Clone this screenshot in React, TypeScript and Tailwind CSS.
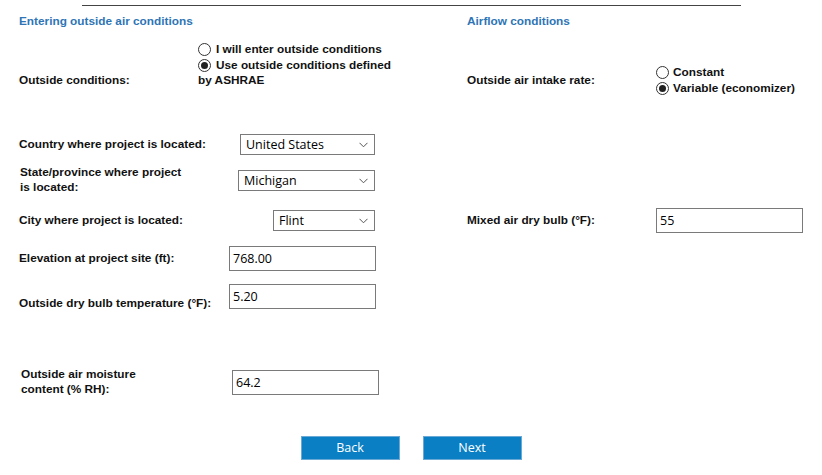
import React from "react";

const LABEL = "text-[11.8px] font-bold text-[#111] leading-[15px]";
const FIELD_FONT = { fontFamily: '"Open Sans", "Noto Sans", sans-serif' };

function Radio({ checked }: { checked?: boolean }) {
  return (
    <span className="inline-flex w-[13px] h-[13px] flex-shrink-0 rounded-full border border-[#333] bg-white items-center justify-center">
      {checked && <span className="w-[7px] h-[7px] rounded-full bg-[#222]" />}
    </span>
  );
}

function Select({ value, width }: { value: string; width: string }) {
  return (
    <div
      className={`${width} h-[21px] border border-[#7a7a7a] bg-white flex items-center justify-between pl-[5px] pr-[6px] pt-[2px] text-[12.5px] text-black`}
      style={FIELD_FONT}
    >
      <span>{value}</span>
      <svg width="9" height="6" viewBox="0 0 9 6" className="flex-shrink-0 -mt-[2px]">
        <path d="M0.5 0.8 L4.5 4.8 L8.5 0.8" fill="none" stroke="#555" strokeWidth="1" />
      </svg>
    </div>
  );
}

function Input({ value }: { value: string }) {
  return (
    <div
      className="w-[147px] h-[25px] border border-[#7a7a7a] bg-white flex items-center pl-[3px] pt-[2px] text-[12.5px] text-black"
      style={FIELD_FONT}
    >
      {value}
    </div>
  );
}

export default function App() {
  return (
    <div
      className="w-[822px] h-[475px] bg-white overflow-hidden"
      style={{ fontFamily: '"Liberation Sans", Arial, sans-serif' }}
    >
      <div className="pt-[5px]">
        <div className="ml-[82px] w-[659px] h-px bg-[#444]" />
      </div>

      <div className="flex items-start">
        {/* Left column */}
        <div className="w-[467px] pl-[19px] flex flex-col">
          <div className="mt-[8px] h-[14px] leading-[14px] text-[11.8px] font-bold text-[#2e75b6]">
            Entering outside air conditions
          </div>

          <div className="mt-[13px] flex items-end">
            <div className={`w-[179px] ${LABEL}`}>Outside conditions:</div>
            <div className={LABEL}>
              <div className="h-[16px] flex items-center gap-[5px]">
                <Radio />
                <span>I will enter outside conditions</span>
              </div>
              <div className="h-[16px] flex items-center gap-[5px]">
                <Radio checked />
                <span>Use outside conditions defined</span>
              </div>
              <div className="h-[15px]">by ASHRAE</div>
            </div>
          </div>

          <div className="mt-[46px] h-[21px] flex items-center">
            <div className={`w-[221px] ${LABEL}`}>Country where project is located:</div>
            <Select value="United States" width="w-[135px]" />
          </div>

          <div className="mt-[10px] flex items-start">
            <div className={`w-[219px] pl-[1px] ${LABEL}`}>
              State/province where project
              <br />
              is located:
            </div>
            <div className="mt-[5px]">
              <Select value="Michigan" width="w-[137px]" />
            </div>
          </div>

          <div className="mt-[15px] h-[21px] flex items-center">
            <div className={`w-[254px] ${LABEL}`}>City where project is located:</div>
            <Select value="Flint" width="w-[102px]" />
          </div>

          <div className="mt-[15px] h-[25px] flex items-center">
            <div className={`w-[210px] ${LABEL}`}>Elevation at project site (ft):</div>
            <Input value="768.00" />
          </div>

          <div className="mt-[13px] h-[25px] flex items-start">
            <div className={`w-[210px] mt-[12px] ${LABEL}`}>Outside dry bulb temperature (°F):</div>
            <Input value="5.20" />
          </div>

          <div className="mt-[61px] flex items-start">
            <div className={`w-[213px] pl-[2px] -mt-[3px] ${LABEL}`}>
              Outside air moisture
              <br />
              content (% RH):
            </div>
            <Input value="64.2" />
          </div>
        </div>

        {/* Right column */}
        <div className="flex flex-col">
          <div className="mt-[8px] h-[14px] leading-[14px] text-[11.8px] font-bold text-[#2e75b6]">
            Airflow conditions
          </div>

          <div className="mt-[36px] flex items-center">
            <div className={`w-[189px] ${LABEL}`}>Outside air intake rate:</div>
            <div className={LABEL}>
              <div className="h-[16px] flex items-center gap-[4px]">
                <Radio />
                <span>Constant</span>
              </div>
              <div className="h-[16px] flex items-center gap-[4px]">
                <Radio checked />
                <span>Variable (economizer)</span>
              </div>
            </div>
          </div>

          <div className="mt-[112px] h-[25px] flex items-center">
            <div className={`w-[189px] ${LABEL}`}>Mixed air dry bulb (°F):</div>
            <Input value="55" />
          </div>
        </div>
      </div>

      <div className="mt-[39px] flex justify-center gap-[23px]">
        {["Back", "Next"].map((t) => (
          <button
            key={t}
            className="w-[99px] h-[24px] bg-[#0a7fc4] border border-[#6aa9d6] text-white text-[12.5px] flex items-center justify-center"
            style={FIELD_FONT}
          >
            {t}
          </button>
        ))}
      </div>
    </div>
  );
}
